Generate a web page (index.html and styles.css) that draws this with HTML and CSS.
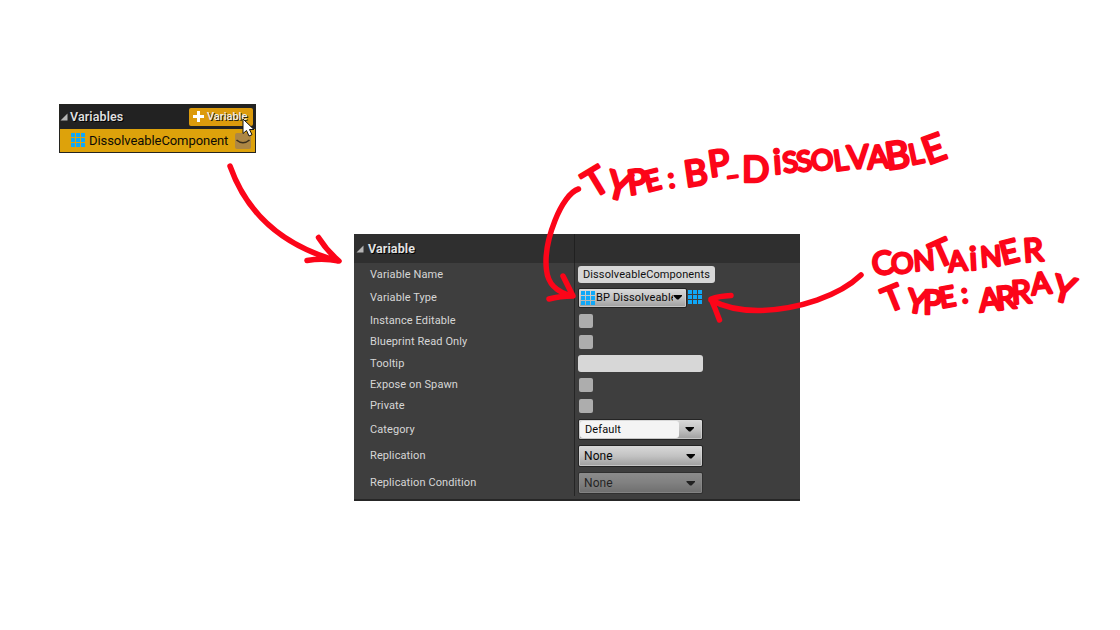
FILE: index.html
```html
<!DOCTYPE html>
<html lang="en">
<head>
<meta charset="utf-8">
<title>Blueprint variable setup</title>
<link rel="stylesheet" href="styles.css">
</head>
<body>
<svg class="defs" width="0" height="0">
  <symbol id="grid" viewBox="0 0 14 14">
    <path fill="#10a8f8" d="M0 0h4v4H0zM5 0h4v4H5zM10 0h4v4h-4zM0 5h4v4H0zM5 5h4v4H5zM10 5h4v4h-4zM0 10h4v4H0zM5 10h4v4H5zM10 10h4v4h-4z"/>
  </symbol>
  <symbol id="caret" viewBox="0 0 10 5"><path d="M0.500 0h8.500v1L5.500 4.500h-1.500L0.500 1z"/></symbol>
  <symbol id="fold" viewBox="0 0 8 8"><path d="M7.5 0.5V7.5H0.5z"/></symbol>
</svg>

<main class="canvas">
  <section class="variables">
    <header class="variables-head">
      <svg class="fold"><use href="#fold"/></svg>
      <span class="variables-title">Variables</span>
      <button class="add">
        <svg class="plus" viewBox="0 0 11 11"><path d="M4 0h3v4h4v3H7v4H4V7H0V4h4z"/></svg>
        <span>Variable</span>
      </button>
    </header>
    <div class="variable-item">
      <svg class="grid"><use href="#grid"/></svg>
      <span class="variable-name">DissolveableComponent</span>
      <span class="eye"><svg viewBox="0 0 16 16"><path d="M1.5 7Q8 12.500 14.500 7" fill="none" stroke="#3a2f1b" stroke-width="1.6"/></svg></span>
    </div>
    <svg class="cursor" viewBox="0 0 13 19"><path d="M1 1V15.500L4.500 12.500L7 18L10 16.700L7.500 11.500H12z" fill="#fff" stroke="#111" stroke-width="1"/></svg>
  </section>

  <section class="details">
    <header class="details-head">
      <div class="details-title"><svg class="fold"><use href="#fold"/></svg><span>Variable</span></div>
      <div class="details-blank"></div>
    </header>
    <div class="row h22"><label>Variable Name</label><div class="cell"><span class="field name-field">DissolveableComponents</span></div></div>
    <div class="row h24"><label>Variable Type</label><div class="cell">
      <span class="combo type"><svg class="grid"><use href="#grid"/></svg><span class="type-name">BP Dissolveable</span><svg class="caret"><use href="#caret"/></svg></span>
      <svg class="grid container-kind"><use href="#grid"/></svg></div></div>
    <div class="row h22"><label>Instance Editable</label><div class="cell"><span class="check"></span></div></div>
    <div class="row h21"><label>Blueprint Read Only</label><div class="cell"><span class="check"></span></div></div>
    <div class="row h22"><label>Tooltip</label><div class="cell"><span class="field tip-field"></span></div></div>
    <div class="row h21"><label>Expose on Spawn</label><div class="cell"><span class="check"></span></div></div>
    <div class="row h21"><label>Private</label><div class="cell"><span class="check"></span></div></div>
    <div class="row h26"><label>Category</label><div class="cell"><span class="combo category"><span class="category-value">Default</span><svg class="caret"><use href="#caret"/></svg></span></div></div>
    <div class="row h27"><label>Replication</label><div class="cell"><span class="combo select">None<svg class="caret"><use href="#caret"/></svg></span></div></div>
    <div class="row h27"><label>Replication Condition</label><div class="cell"><span class="combo select disabled">None<svg class="caret"><use href="#caret"/></svg></span></div></div>
    <footer class="details-end"></footer>
  </section>

  <svg class="notes" viewBox="0 0 1120 630">
    <g class="arrows">
      <path d="M230 166C247 214 283 246 338 261M318.500 237.500Q327 251 339 261Q323 258 307 260.500"/>
      <path d="M578.500 189C562 194 543 241 546.500 270C548 284 556 292 572 296M563 276L573 296Q560 296 549 299"/>
      <path d="M861 275C839 296 799 309 761 310.500C740 311 724 307 711 300M731 295.500Q719 296 711 299Q715 308 719.500 320"/>
    </g>
    <g class="hand">
      <text x="593 604 629 647 669" y="199 196 195 192 188" rotate="-31 14 -8 -14 -8"><tspan class="s38">T</tspan><tspan class="s38">Y</tspan><tspan class="s34">P</tspan><tspan class="s28">E:</tspan></text>
      <text x="686 710 727 742 774 784 798 812 835 848 868 887 911 928" y="187 177 175 182 174 173 172 171 171 169 169 170 165 165" rotate="-8 -8 -8 0 -4 -8 -8 -6 -8 -4 -4 -8 -12 -20"><tspan class="s36">BP</tspan><tspan class="s24">_</tspan><tspan class="s36">D</tspan><tspan class="s34">i</tspan><tspan class="s28">SSO</tspan><tspan class="s28">L</tspan><tspan class="s32">VA</tspan><tspan class="s38">B</tspan><tspan class="s28">L</tspan><tspan class="s38">E</tspan></text>
      <text x="874 892 914 937 949 970 981 1003 1024" y="276 274 271 269 272 270 267 265 262" rotate="-10 -5 -4 -24 -6 -3 -4 -14 -4"><tspan class="s32">C</tspan><tspan class="s28">ON</tspan><tspan class="s36">T</tspan><tspan class="s28">A</tspan><tspan class="s32">i</tspan><tspan class="s28">N</tspan><tspan class="s32">ER</tspan></text>
      <text x="888 905 923 941 962" y="313 311 314 308 303" rotate="-22 10 0 -10 -6"><tspan class="s34">T</tspan><tspan class="s32">YP</tspan><tspan class="s28">E:</tspan></text>
      <text x="980 997 1012 1032 1050" y="312 310 304 295 299" rotate="-6 -6 -4 -6 14"><tspan class="s32">ARR</tspan><tspan class="s30">A</tspan><tspan class="s36">Y</tspan></text>
    </g>
  </svg>
</main>
</body>
</html>
```
FILE: styles.css
```css
* { box-sizing: border-box; }
body { margin: 0; background: #fff; font-family: Roboto, "Liberation Sans", sans-serif; }
.defs { position: absolute; }
.canvas { position: relative; width: 1120px; height: 630px; overflow: hidden; }
svg { flex: none; display: block; }

.grid { width: 14px; height: 14px; }
.fold { width: 8px; height: 8px; fill: #b5b5b5; }
.caret { width: 10px; height: 5px; fill: #050505; }

/* variable list */
.variables { position: absolute; left: 59px; top: 104px; width: 197px; height: 49px; background: #222; border: 1px solid #242420; }
.variables-head { display: flex; align-items: center; height: 24px; padding-right: 2px; }
.variables-title { flex: 1; margin: -2px 0 0 2px; color: #dedede; font-size: 12.500px; font-weight: 600; letter-spacing: .1px; text-shadow: 1px 1px #000; }
.add { display: flex; align-items: center; gap: 3px; width: 64px; height: 18px; padding: 0 0 0 4px; border: 0; border-radius: 2px; background: #dc9b0c; color: #f0eee6; font: 500 11px Roboto, sans-serif; text-shadow: 1px 1px #2a2410; }
.add span { margin-top: -2px; }
.plus { width: 11px; height: 11px; margin-top: -1px; fill: #fff; }
.variable-item { display: flex; align-items: center; height: 23px; padding-left: 11px; background: #dda20b; }
.variable-item .grid { margin-top: -1px; }
.variable-name { width: 146px; margin-left: 4px; color: #0d0b05; font-size: 13px; letter-spacing: -.07px; white-space: nowrap; }
.eye { width: 16px; height: 16px; border-radius: 2px; background: #ad8744; }
.cursor { position: absolute; left: 182px; top: 13px; width: 13px; height: 19px; }

/* details panel */
.details { position: absolute; left: 354px; top: 234px; width: 446px; height: 267px; background: #3e3e3e; color: #d6d6d6; font-size: 11px; letter-spacing: .1px; }
.details-head { display: flex; height: 29px; background: #2f2f2f; }
.details-title { display: flex; align-items: center; gap: 4px; width: 221px; padding-left: 2px; border-right: 1px solid #202020; color: #e2e2e2; font-size: 12.500px; font-weight: 700; letter-spacing: .1px; text-shadow: 1px 1px #000; }
.row { display: flex; }
.row label { width: 221px; padding: 0 0 0 16px; border-right: 1px solid #252525; display: flex; align-items: center; }
.cell { display: flex; align-items: center; padding: 1px 0 0 3px; }
.h21 { height: 21px; } .h22 { height: 22px; } .h24 { height: 24px; } .h26 { height: 26px; } .h27 { height: 27px; }
.field { height: 17px; border-radius: 3px; background: #d7d7d7; color: #111; line-height: 17px; }
.name-field { width: 137px; padding-left: 5px; }
.tip-field { width: 125px; }
.check { width: 14px; height: 14px; margin-left: 1px; border-radius: 2px; background: #adadad; }
.combo { display: flex; align-items: center; border: 1px solid #242424; border-radius: 2px; background: linear-gradient(#d9d9d9, #c2c2c2 50%, #9e9e9e); box-shadow: inset 0 0 0 1px #d8d8d8aa; color: #080808; }
.type { width: 109px; height: 20px; padding-left: 2px; }
.type-name { width: 77px; margin-left: 1px; padding-right: 1px; overflow: hidden; white-space: nowrap; letter-spacing: .15px; }
.container-kind { margin: -1px 0 0 1px; }
.category { width: 125px; height: 21px; padding-left: 1px; }
.category-value { width: 99px; height: 17px; padding-left: 5px; margin-right: 6px; border-radius: 3px; background: #f4f4f4; line-height: 17px; }
.select { justify-content: space-between; width: 125px; height: 22px; padding: 0 6px 0 5px; font-size: 12px; }
.disabled { opacity: .5; }
.details-end { height: 5px; border-bottom: 2px solid #262626; }

/* handwritten annotations */
.notes { position: absolute; inset: 0; width: 1120px; height: 630px; }
.arrows { fill: none; stroke: #fc0519; stroke-width: 5.500; stroke-linecap: round; stroke-linejoin: round; }
.hand { font-family: Lato, sans-serif; fill: #fc0519; stroke: #fc0519; stroke-width: 2.700; stroke-linejoin: round; }
.s24 { font-size: 24px; }
.s28 { font-size: 28px; }
.s30 { font-size: 30px; }
.s32 { font-size: 32px; }
.s34 { font-size: 34px; }
.s36 { font-size: 36px; }
.s38 { font-size: 38px; }
```
